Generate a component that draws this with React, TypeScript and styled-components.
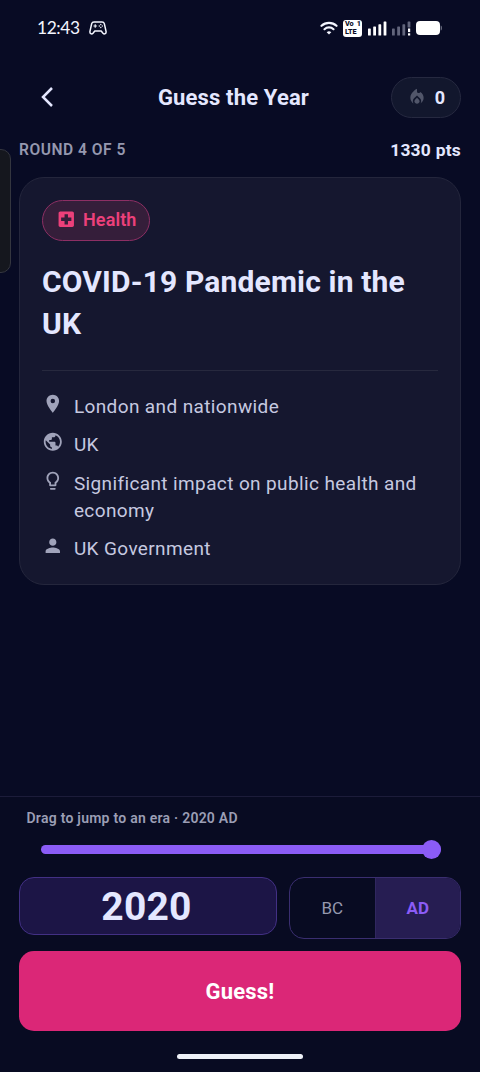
import React from "react";
import styled, { createGlobalStyle } from "styled-components";
import {
  MdLocalFireDepartment,
  MdLocalHospital,
  MdLightbulbOutline,
  MdPerson,
  MdPlace,
  MdPublic,
} from "react-icons/md";

const GlobalStyle = createGlobalStyle`
  * { box-sizing: border-box; }
  body { margin: 0; background: #080b24; }
  button { font: inherit; color: inherit; background: none; border: 0; padding: 0; margin: 0; }
`;

const Screen = styled.main`
  position: relative;
  display: flex;
  flex-direction: column;
  width: 480px;
  height: 1072px;
  overflow: hidden;
  background: #080b24;
  color: #e4e7ff;
  font-family: Roboto, "Liberation Sans", sans-serif;
  white-space: nowrap;
`;

const StatusBar = styled.div`
  display: flex;
  align-items: center;
  height: 56px;
  padding: 0 37px;
  color: #f4f6ff;
`;

const Clock = styled.span`
  width: 52px;
  font-family: Lato, sans-serif;
  font-size: 17.4px;
  line-height: 20px;
  letter-spacing: -0.4px;
`;

const StatusIcons = styled.div`
  display: flex;
  align-items: center;
  gap: 5.2px;
  margin-left: auto;
`;

const VolteBadge = styled.span`
  display: flex;
  flex-direction: column;
  justify-content: center;
  width: 19px;
  height: 17px;
  padding: 0 1.5px;
  border-radius: 3px;
  background: #fff;
  color: #080b24;
  font-family: Roboto, sans-serif;
  font-size: 7.3px;
  font-weight: 800;
  line-height: 8px;
  letter-spacing: -0.1px;
`;

const VolteLine = styled.span`
  display: flex;
  justify-content: space-between;
  height: 8px;
`;

const Header = styled.header`
  display: grid;
  grid-template-columns: 90px 1fr 90px;
  align-items: center;
  height: 82px;
  padding: 0 19px;
`;

const BackButton = styled.button`
  display: flex;
  padding-left: 20px;
`;

const Title = styled.h1`
  margin: 2px -20px 0 -33px;
  font-size: 22px;
  line-height: 28px;
  font-weight: 700;
  letter-spacing: 0.15px;
  text-align: center;
`;

const StreakPill = styled.div`
  display: flex;
  align-items: center;
  justify-content: center;
  gap: 8px;
  width: 70px;
  height: 41px;
  margin-left: auto;
  border: 1px solid #262940;
  border-radius: 21px;
  background: #12172d;
  font-size: 18px;
  font-weight: 700;
  svg { color: #51566a; }
`;

const RoundRow = styled.div`
  display: flex;
  align-items: center;
  justify-content: space-between;
  height: 24px;
  padding: 0 19px;
`;

const RoundLabel = styled.span`
  color: #9598af;
  font-size: 15.6px;
  font-weight: 600;
  letter-spacing: 0.5px;
`;

const Points = styled.span`
  font-size: 17.4px;
  font-weight: 700;
  letter-spacing: 0.25px;
`;

const Card = styled.section`
  height: 408px;
  margin: 15px 19px 0;
  padding: 22px;
  border: 1px solid #24263c;
  border-radius: 25px;
  background: #15172f;
`;

const CategoryChip = styled.div`
  display: flex;
  align-items: center;
  gap: 7px;
  width: 108px;
  height: 41px;
  padding: 0 0 2px 12.5px;
  border: 1px solid #8d2f64;
  border-radius: 21px;
  background: #351e3a;
  color: #ec407a;
  font-size: 18px;
  font-weight: 600;
  letter-spacing: 0.1px;
`;

const EventTitle = styled.h2`
  margin: 20px 0 25px;
  font-size: 30px;
  line-height: 42px;
  font-weight: 700;
  letter-spacing: 0.16px;
  white-space: normal;
`;

const FactList = styled.ul`
  display: flex;
  flex-direction: column;
  gap: 11.5px;
  margin: 0;
  padding: 21.6px 0 0;
  border-top: 1px solid #27293e;
  list-style: none;
`;

const Fact = styled.li`
  display: flex;
  align-items: flex-start;
  gap: 10.3px;
  color: #c6c9e0;
  font-size: 19px;
  line-height: 27px;
  letter-spacing: 0.38px;
  white-space: normal;
  svg { flex: none; color: #a0a3ba; }
`;

const Controls = styled.section`
  display: flex;
  flex-direction: column;
  margin-top: auto;
  height: 276px;
  padding: 10px 19px 0;
  border-top: 1px solid #1c1c3a;
  background: #080b22;
`;

const SliderLabel = styled.div`
  padding-left: 7.5px;
  color: #9b9eb5;
  font-size: 14px;
  line-height: 22px;
  font-weight: 600;
  letter-spacing: 0.25px;
`;

const SliderTrack = styled.div`
  display: flex;
  align-items: center;
  justify-content: flex-end;
  height: 9px;
  margin: 16px 20px 0 21.5px;
  border-radius: 5px;
  background: #8b5cf6;
`;

const SliderThumb = styled.span`
  width: 19px;
  height: 19px;
  border-radius: 50%;
  background: #8b5cf6;
`;

const AnswerRow = styled.div`
  display: flex;
  align-items: flex-start;
  gap: 12px;
  margin-top: 23px;
`;

const YearField = styled.div`
  display: flex;
  align-items: center;
  justify-content: center;
  width: 258px;
  height: 58px;
  padding: 1px 3px 0 0;
  border: 1.5px solid #423084;
  border-radius: 15px;
  background: #1c1546;
  font-size: 39px;
  font-weight: 700;
  letter-spacing: 0.2px;
`;

const EraToggle = styled.div`
  display: flex;
  width: 172px;
  height: 62px;
  overflow: hidden;
  border: 1.5px solid #3a2e70;
  border-radius: 15px;
`;

const EraOption = styled.button<{ $active?: boolean }>`
  flex: 1;
  && {
    color: ${(p) => (p.$active ? "#8b5cf6" : "#9699af")};
    background: ${(p) => (p.$active ? "#261d52" : "transparent")};
    border-left: ${(p) => (p.$active ? "1px solid #30275f" : "0")};
    font-size: 17px;
    font-weight: ${(p) => (p.$active ? 700 : 400)};
  }
`;

const GuessButton = styled.button`
  && {
    height: 80px;
    margin-top: 12px;
    border-radius: 15px;
    background: #db2777;
    color: #fff;
    font-size: 22px;
    font-weight: 700;
    letter-spacing: 0.2px;
  }
`;

const HomeIndicator = styled.div`
  width: 126px;
  height: 5px;
  margin: 23px auto 0;
  border-radius: 3px;
  background: #eef1f8;
`;

const EdgeHandle = styled.div`
  position: absolute;
  top: 149px;
  left: -14px;
  width: 25px;
  height: 124px;
  border: 1.5px solid #34363f;
  border-radius: 10px;
  background: #15171e;
`;

const facts = [
  { Icon: MdPlace, text: "London and nationwide" },
  { Icon: MdPublic, text: "UK" },
  { Icon: MdLightbulbOutline, text: "Significant impact on public health and economy" },
  { Icon: MdPerson, text: "UK Government" },
];

function GamepadIcon() {
  return (
    <svg width="18" height="14" viewBox="0 0 18 14" fill="none" stroke="currentColor" strokeWidth="1.5" strokeLinejoin="round">
      <path d="M5 .9h8c1.4 0 2 .6 2.300 1.700l1.700 7.500c.5 2.500-1.600 3.700-3 2.200L12.200 10H5.800L4 12.300c-1.400 1.500-3.500.3-3-2.200l1.700-7.500C3 1.500 3.600.9 5 .9Z" />
      <path d="M6.200 3.300v3.400M4.500 5h3.400" strokeWidth="1.1" />
      <g fill="currentColor" stroke="none">
        <circle cx="11.8" cy="3.5" r=".7" />
        <circle cx="11.8" cy="6.5" r=".7" />
        <circle cx="10.3" cy="5" r=".7" />
        <circle cx="13.3" cy="5" r=".7" />
      </g>
    </svg>
  );
}

function WifiIcon() {
  return (
    <svg width="18" height="14" viewBox="0 0 18 14" fill="none" stroke="currentColor" strokeWidth="2.2" strokeLinecap="round">
      <path d="M1.5 4.8a11 11 0 0 1 15 0" />
      <path d="M4.5 8.2a6.7 6.7 0 0 1 9 0" />
      <path d="M9 13.4 6.7 11.2a3.4 3.4 0 0 1 4.6 0Z" fill="currentColor" stroke="none" />
    </svg>
  );
}

function SignalIcon({ weak = false }: { weak?: boolean }) {
  return (
    <svg width="19" height="15" viewBox="0 0 19 15" fill={weak ? "#62657c" : "#fff"}>
      <rect x="0" y="7.5" width="2.8" height="7" rx=".6" />
      <rect x="5.2" y="5.5" width="2.8" height="9" rx=".6" />
      <rect x="10.4" y="3.3" width="2.8" height="11.2" rx=".6" />
      <rect x="15.6" y=".5" width="2.8" height={weak ? 6 : 14} rx=".6" />
      {weak && (
        <g fill="#fff">
          <rect x="16" y="7.5" width="2.2" height="3.6" />
          <rect x="16" y="12.3" width="2.2" height="2.2" />
        </g>
      )}
    </svg>
  );
}

function BatteryIcon() {
  return (
    <svg width="27" height="14" viewBox="0 0 27 14">
      <rect width="24" height="14" rx="4" fill="#fff" />
      <path d="M24.7 4.5c1.6.3 1.6 4.7 0 5Z" fill="#777a8d" />
    </svg>
  );
}

export default function App() {
  return (
    <Screen>
      <GlobalStyle />
      <StatusBar>
        <Clock>12:43</Clock>
        <GamepadIcon />
        <StatusIcons>
          <WifiIcon />
          <VolteBadge>
            <VolteLine><span>Vo</span><span>1</span></VolteLine>
            <VolteLine>LTE</VolteLine>
          </VolteBadge>
          <SignalIcon />
          <SignalIcon weak />
          <BatteryIcon />
        </StatusIcons>
      </StatusBar>

      <Header>
        <BackButton aria-label="Back">
          <svg width="16" height="22" viewBox="0 0 16 22" fill="none" stroke="#e4e7ff" strokeWidth="2.5">
            <path d="M13 2 4 11l9 9" />
          </svg>
        </BackButton>
        <Title>Guess the Year</Title>
        <StreakPill>
          <MdLocalFireDepartment size={20} />
          <span>0</span>
        </StreakPill>
      </Header>

      <RoundRow>
        <RoundLabel>ROUND 4 OF 5</RoundLabel>
        <Points>1330 pts</Points>
      </RoundRow>

      <Card>
        <CategoryChip>
          <MdLocalHospital size={20.5} />
          <span>Health</span>
        </CategoryChip>
        <EventTitle>COVID-19 Pandemic in the UK</EventTitle>
        <FactList>
          {facts.map(({ Icon, text }) => (
            <Fact key={text}>
              <Icon size={21.6} />
              <span>{text}</span>
            </Fact>
          ))}
        </FactList>
      </Card>

      <Controls>
        <SliderLabel>Drag to jump to an era · 2020 AD</SliderLabel>
        <SliderTrack>
          <SliderThumb />
        </SliderTrack>
        <AnswerRow>
          <YearField>2020</YearField>
          <EraToggle>
            <EraOption>BC</EraOption>
            <EraOption $active>AD</EraOption>
          </EraToggle>
        </AnswerRow>
        <GuessButton>Guess!</GuessButton>
        <HomeIndicator />
      </Controls>

      <EdgeHandle />
    </Screen>
  );
}
